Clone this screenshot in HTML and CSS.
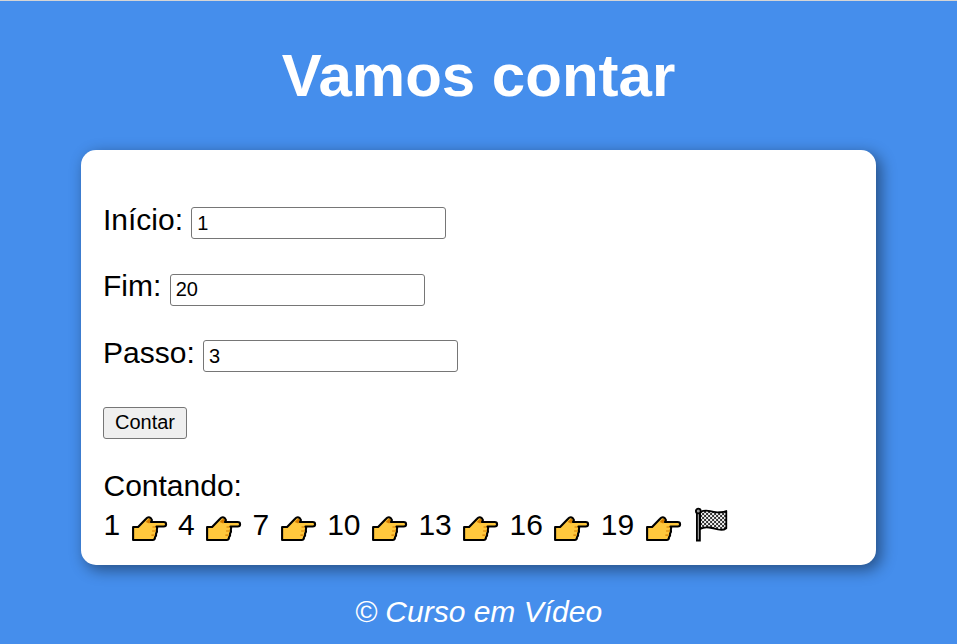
FILE: index.html
```html
<!DOCTYPE html>
<html lang="pt-br">
<head>
<meta charset="UTF-8">
<title>Vamos contar</title>
<link rel="stylesheet" href="styles.css">
</head>
<body>
<svg class="symbols" aria-hidden="true">
  <symbol id="hand" viewBox="0 0 41 36">
    <path class="skin" d="M4 20H9L17 11.7Q19.3 9.1 21.8 11.2Q23.2 12.5 22.3 14.3L21.8 15H34.5Q37 15 37 17.2T34.5 19.5H27.4Q28.6 20.6 27.8 22.7Q28.4 24.8 27 26.5Q27.5 28.8 25.9 30.2Q26 33 23.5 33H4Z"/>
    <path class="shade" d="M16.6 15L20.4 11.2L21.8 13.4L20.2 16.6Z"/>
    <path class="fold" d="M23.4 20H27M23 24H27M22.3 28.2H25.5"/>
    <path class="outline" d="M4 20H9L17 11.7Q19.3 9.1 21.8 11.2Q23.2 12.5 22.3 14.3L21.8 15H34.5Q37 15 37 17.2T34.5 19.5H27.4Q28.6 20.6 27.8 22.7Q28.4 24.8 27 26.5Q27.5 28.8 25.9 30.2Q26 33 23.5 33H4Z"/>
  </symbol>
  <symbol id="flag" viewBox="0 0 41 36">
    <defs>
      <pattern id="checks" width="4" height="4" patternUnits="userSpaceOnUse">
        <path fill="#eee" d="M0 0H4V4H0Z"/>
        <path fill="#333" d="M0 0H2V2H0ZM2 2H4V4H2Z"/>
      </pattern>
    </defs>
    <path class="pole" d="M4.8 4.5H7.8V33.5H4.8Z"/>
    <path class="cloth" d="M8 5Q13 2.7 18 4.2T28 5.2Q31.5 5.4 34.2 4V21.3Q31 23.8 26 22.5T17 20.5Q12 19.7 8 22Z"/>
    <circle class="knob" cx="6.2" cy="4" r="2.4"/>
  </symbol>
</svg>
<header><h1>Vamos contar</h1></header>
<section class="card">
  <div class="form">
    <div class="field"><label for="start">Início:</label><input type="number" id="start" value="1"></div>
    <div class="field"><label for="end">Fim:</label><input type="number" id="end" value="20"></div>
    <div class="field"><label for="step">Passo:</label><input type="number" id="step" value="3"></div>
    <div class="field actions"><button type="button">Contar</button></div>
  </div>
  <div class="result">Contando:<br>
    1 <svg class="emoji"><use href="#hand"/></svg>
    4 <svg class="emoji"><use href="#hand"/></svg>
    7 <svg class="emoji"><use href="#hand"/></svg>
    10 <svg class="emoji"><use href="#hand"/></svg>
    13 <svg class="emoji"><use href="#hand"/></svg>
    16 <svg class="emoji"><use href="#hand"/></svg>
    19 <svg class="emoji"><use href="#hand"/></svg>
    <svg class="emoji"><use href="#flag"/></svg>
  </div>
</section>
<footer>© Curso em Vídeo</footer>
</body>
</html>
```
FILE: styles.css
```css
* { box-sizing: border-box; }

body {
  margin: 0;
  height: 644px;
  overflow: hidden;
  border-top: 1px solid #d5d5d5;
  background: #458eec;
  color: #000;
  font: 30px "Liberation Sans", Arial, sans-serif;
}

.symbols { display: block; width: 0; height: 0; }

header { padding-top: 41px; height: 149px; color: #fff; text-align: center; }
h1 { margin: 0; font-size: 60px; line-height: 68px; }

.card {
  width: 795px;
  height: 415px;
  margin: 0 auto;
  padding: 56.6px 22px 0;
  border-radius: 15px;
  background: #fff;
  box-shadow: 4.5px 4.5px 15px rgba(0, 0, 0, .44);
}

.form { display: grid; gap: 34.5px; }
.field { display: flex; align-items: baseline; gap: 8.3px; height: 32px; }
.actions { margin-top: .7px; }
label { line-height: 25px; }

input, button {
  height: 32px;
  border: 1px solid #767676;
  border-radius: 3px;
  color: #000;
  font: 20px "Liberation Sans", Arial, sans-serif;
}
input { width: 255px; padding: 1px 5px; background: #fff; appearance: textfield; }
input::-webkit-inner-spin-button { appearance: none; margin: 0; }
button { width: 84px; padding: 0 0 1px; background: #efefef; }

.result { margin-top: 27.5px; padding-left: .5px; line-height: 39px; }
.emoji { width: 41.2px; height: 36px; vertical-align: -8px; }

.skin { fill: #ffc83d; }
.shade { fill: #d67d00; }
.fold { fill: none; stroke: #d67d00; stroke-width: 1.2; }
.outline { fill: none; stroke: #000; stroke-width: 2.1; stroke-linejoin: round; }
.pole { fill: #999; stroke: #000; stroke-width: 1.8; }
.cloth { fill: url(#checks); stroke: #000; stroke-width: 1.8; stroke-linejoin: round; }
.knob { fill: #999; stroke: #000; stroke-width: 1.8; }

footer { padding-top: 29px; color: #fff; font-style: italic; line-height: 36px; text-align: center; }
```
